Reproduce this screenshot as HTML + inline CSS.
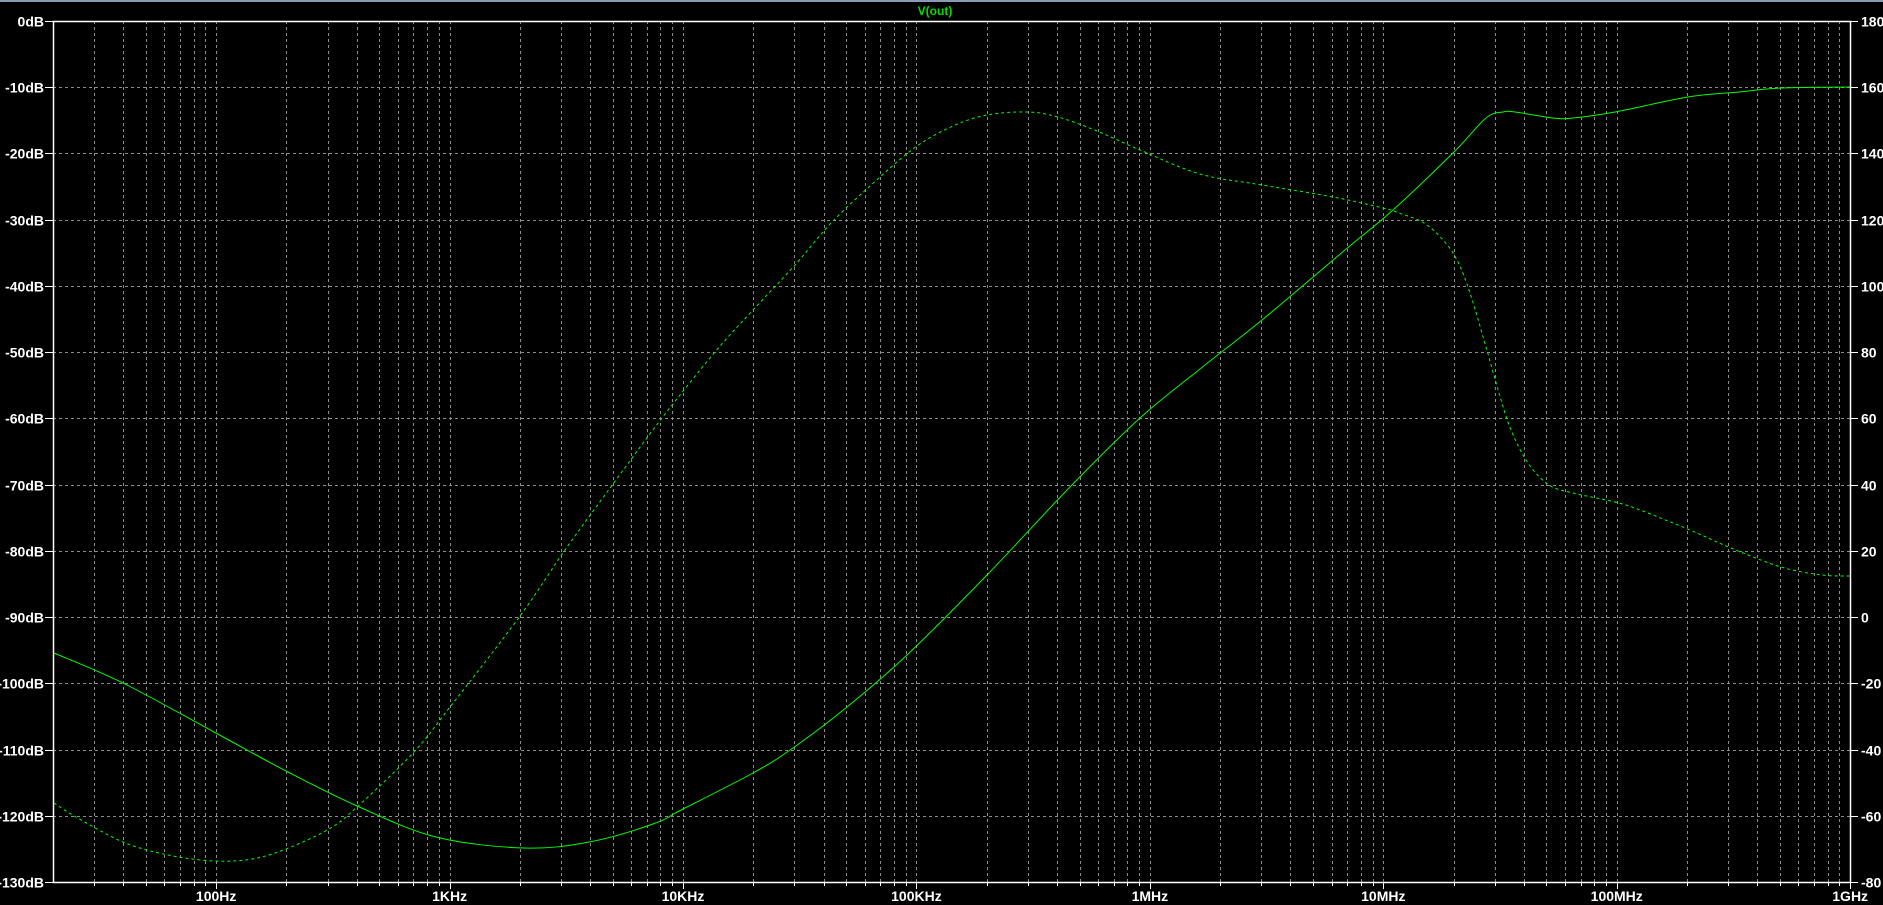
<!DOCTYPE html>
<html><head><meta charset="utf-8"><style>
html,body{margin:0;padding:0;background:#000;width:1883px;height:905px;overflow:hidden}
svg{display:block}
text{font-family:"Liberation Sans",sans-serif;font-weight:bold;font-size:14px;fill:#fff}
</style></head><body>
<svg id="s" width="1883" height="905" viewBox="0 0 1883 905" xmlns="http://www.w3.org/2000/svg">
<rect x="0" y="0" width="1883" height="905" fill="#000"/>
<rect x="0" y="0" width="1883" height="2" fill="#8a9bb5"/>
<text x="935" y="15" text-anchor="middle" style="fill:#00e000;font-size:12px">V(out)</text>
<g id="grid"></g>
<g fill="none" stroke="#00ff00" stroke-width="1">
<path id="mag"/>
<path id="ph" stroke-dasharray="3 3"/>
</g>
<g id="axes"></g>
</svg>
<script>
var NS="http://www.w3.org/2000/svg";
var L=53,R=1850,T=21,B=882,D=233.43,dy=(B-T)/13;
function el(p,n,a,t){var e=document.createElementNS(NS,n);for(var k in a)e.setAttribute(k,a[k]);if(t)e.textContent=t;p.appendChild(e);return e;}
var g=document.getElementById('grid'),ax=document.getElementById('axes');
function X(f){return L+D*Math.log10(f/20);}
var dec=[[100,'100Hz'],[1e3,'1KHz'],[1e4,'10KHz'],[1e5,'100KHz'],[1e6,'1MHz'],[1e7,'10MHz'],[1e8,'100MHz'],[1e9,'1GHz']];
for(var e=1;e<=9;e++){for(var m=1;m<=9;m++){var f=m*Math.pow(10,e);if(f<=20||f>1e9)continue;var x=Math.round(X(f))+0.5;
 if(f<1e9)el(g,'line',{x1:x,y1:T,x2:x,y2:B,stroke:'#8c8c8c','stroke-width':1,'stroke-dasharray':'3 3'});
 el(ax,'line',{x1:x,y1:B,x2:x,y2:B+(m==1?7:4),stroke:'#fff','stroke-width':1});}}
for(var i=1;i<13;i++){var y=Math.round(T+i*dy)+0.5;el(g,'line',{x1:L,y1:y,x2:R,y2:y,stroke:'#8c8c8c','stroke-width':1,'stroke-dasharray':'3 3'});}
for(var i=0;i<=13;i++){var y=Math.round(T+i*dy)+0.5;
 el(ax,'line',{x1:L-8,y1:y,x2:L,y2:y,stroke:'#fff','stroke-width':1});
 el(ax,'line',{x1:R,y1:y,x2:R+8,y2:y,stroke:'#fff','stroke-width':1});
 el(ax,'text',{x:L-9,y:y+5,'text-anchor':'end'},(i==0?'0':'-'+i*10)+'dB');
 el(ax,'text',{x:R+11,y:y+5},String(180-20*i));}
el(ax,'rect',{x:L+0.5,y:T+0.5,width:R-L,height:B-T,fill:'none',stroke:'#fff','stroke-width':1.5});
dec.forEach(function(d){el(ax,'text',{x:X(d[0]),y:901,'text-anchor':'middle'},d[1]);});
function cr(p){var s='M'+p[0][0]+','+p[0][1];for(var i=0;i<p.length-1;i++){var p0=p[i-1]||p[i],p1=p[i],p2=p[i+1],p3=p[i+2]||p2;
 s+=' C'+(p1[0]+(p2[0]-p0[0])/6)+','+(p1[1]+(p2[1]-p0[1])/6)+' '+(p2[0]-(p3[0]-p1[0])/6)+','+(p2[1]-(p3[1]-p1[1])/6)+' '+p2[0]+','+p2[1];}return s;}
var mag=[[54,653],[123,683],[214,732],[286,771],[357,806],[436,837],[524,848],[589,842],[653,824],[683,809],[753,773],[793,748],[847,707],[907,655],[987,575],[1070,487],[1140,418],[1200,369],[1262,320],[1345,250],[1393,210],[1454,152],[1486,118],[1503,112],[1515,112],[1553,118],[1573,118],[1615,112],[1688,97],[1739,92],[1781,88],[1850,87]];
var ph=[[54,803],[76,817],[123,842],[168,855],[214,861],[252,859],[286,849],[329,829],[357,807],[413,753],[450,707],[520,616],[565,550],[613,484],[662,418],[715,352],[753,310],[795,265],[833,221],[880,177],[917,146],[953,126],[987,115],[1027,112],[1058,117],[1097,131],[1140,150],[1200,174],[1262,185],[1333,197],[1383,208],[1399,213],[1424,223],[1443,240],[1457,260],[1470,293],[1486,347],[1499,393],[1511,430],[1528,463],[1549,485],[1573,493],[1615,502],[1640,510],[1690,530],[1731,548],[1781,567],[1822,575],[1850,576]];
document.getElementById('mag').setAttribute('d',cr(mag));
document.getElementById('ph').setAttribute('d',cr(ph));
</script>
</body></html>
